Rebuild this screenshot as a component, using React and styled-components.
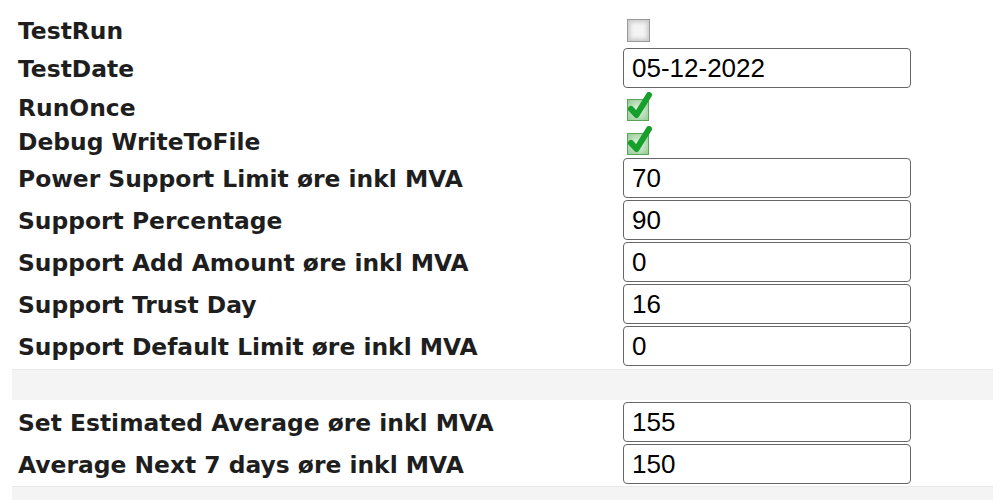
import React from "react";
import styled, { createGlobalStyle } from "styled-components";

const Global = createGlobalStyle`
  body {
    margin: 0;
    background: #fff;
  }
`;

const Page = styled.div`
  padding: 13px 7px 0 12px;
  font-family: "DejaVu Sans", Verdana, sans-serif;
`;

const Row = styled.div`
  display: grid;
  grid-template-columns: 611px 1fr;
  align-items: center;
  height: ${(p) => p.h || 42}px;
`;

const Label = styled.div`
  padding: 2px 0 0 6px;
  font-size: 23.4px;
  font-weight: bold;
  color: #1e1e1e;
  white-space: nowrap;
`;

const Input = styled.input`
  box-sizing: border-box;
  width: 288px;
  height: 40px;
  margin: 0;
  padding: 0 8px;
  border: 1px solid #666;
  border-radius: 4px;
  font-family: "Liberation Sans", Arial, sans-serif;
  font-size: 26px;
  color: #000;
  background: #fff;
  outline: none;
`;

const Box = styled.span`
  display: block;
  width: 21px;
  height: 21px;
  margin-left: 4px;
  border: 1px solid #9a9a9a;
  background: #f4f4f4;
  box-shadow: inset 0 0 4px 2px #c8c8c8;
`;

const Band = styled.div`
  height: 31px;
  margin: ${(p) => p.m};
  background: #f4f4f4;
  border-top: 1px solid #e9e9e9;
  box-sizing: border-box;
`;

function Checked() {
  return (
    <svg width="28" height="30" viewBox="0 0 28 30" style={{ marginLeft: 4, display: "block" }}>
      <defs>
        <radialGradient id="g" cx="50%" cy="50%" r="60%">
          <stop offset="0%" stopColor="#e4f4e4" />
          <stop offset="100%" stopColor="#9ccf9c" />
        </radialGradient>
      </defs>
      <rect x="0.5" y="7.5" width="21" height="21" fill="url(#g)" stroke="#5aa55a" />
      <path d="M4 17 L9.5 23 L22 3" fill="none" stroke="#14a02a" strokeWidth="6" strokeLinecap="round" strokeLinejoin="round" />
    </svg>
  );
}

const fields = [
  ["Power Support Limit øre inkl MVA", "70"],
  ["Support Percentage", "90"],
  ["Support Add Amount øre inkl MVA", "0"],
  ["Support Trust Day", "16"],
  ["Support Default Limit øre inkl MVA", "0"],
];

const extra = [
  ["Set Estimated Average øre inkl MVA", "155"],
  ["Average Next 7 days øre inkl MVA", "150"],
];

export default function App() {
  return (
    <Page>
      <Global />
      <Row h={34}>
        <Label>TestRun</Label>
        <Box />
      </Row>
      <Row>
        <Label>TestDate</Label>
        <Input defaultValue="05-12-2022" />
      </Row>
      <Row h={35}>
        <Label>RunOnce</Label>
        <Checked />
      </Row>
      <Row h={33}>
        <Label>Debug WriteToFile</Label>
        <Checked />
      </Row>
      {fields.map(([l, v]) => (
        <Row key={l}>
          <Label>{l}</Label>
          <Input defaultValue={v} />
        </Row>
      ))}
      <Band m="2px 0 1px" />
      {extra.map(([l, v]) => (
        <Row key={l}>
          <Label>{l}</Label>
          <Input defaultValue={v} />
        </Row>
      ))}
      <Band m="1px 0 0" />
    </Page>
  );
}
